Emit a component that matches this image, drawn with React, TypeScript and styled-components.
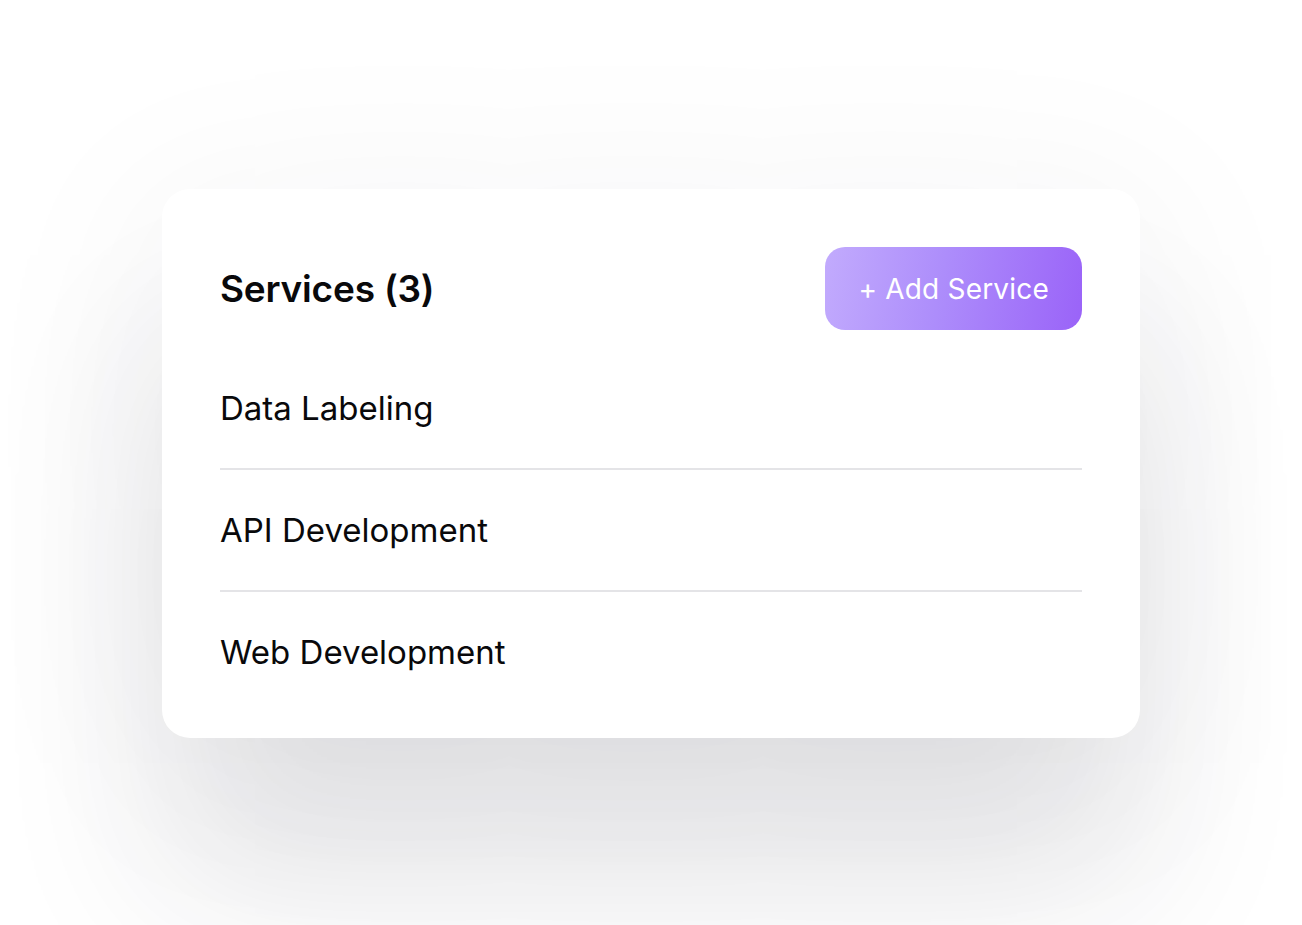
import React from 'react'
import styled, { createGlobalStyle } from 'styled-components'

const GlobalStyle = createGlobalStyle`
    html, body {
        margin: 0;
        padding: 0;
        background: #ffffff;
        font-family: Inter, 'Noto Sans', sans-serif;
        -webkit-font-smoothing: antialiased;
    }
`
const Page = styled.div`
    min-height: 925px;
    display: flex;
    justify-content: center;
    align-items: flex-start;
    padding-top: 189px;
    box-sizing: border-box;
    overflow: hidden;
`
const Card = styled.div`
    width: 978px;
    box-sizing: border-box;
    padding: 58px 58px 26px;
    background: #ffffff;
    border-radius: 28px;
    box-shadow: 0 150px 170px rgba(39, 39, 52, 0.11), 0 30px 200px rgba(39, 39, 52, 0.07);
`
const Header = styled.div`
    display: flex;
    justify-content: space-between;
    align-items: center;
    margin-bottom: 18px;
`
const Title = styled.h2`
    margin: 0;
    font-size: 37px;
    font-weight: 600;
    color: #09090b;
    letter-spacing: -0.2px;
`
const AddButton = styled.button`
    height: 83px;
    padding: 0 33px;
    border: none;
    border-radius: 20px;
    background: linear-gradient(100deg, #c2abfd 0%, #ad8dfb 45%, #9a63f8 100%);
    color: #ffffff;
    font-family: inherit;
    font-size: 28px;
    font-weight: 400;
    letter-spacing: 0.2px;
    cursor: pointer;
`
const List = styled.ul`
    list-style: none;
    margin: 0;
    padding: 0;
`
const Item = styled.li`
    height: 120px;
    display: flex;
    align-items: center;
    font-size: 33px;
    color: #09090b;
    border-bottom: 2px solid #e4e4e7;

    &:last-child {
        border-bottom: none;
    }
`

const services = ['Data Labeling', 'API Development', 'Web Development']

const App = () => {
    return (
        <Page>
            <GlobalStyle />
            <Card>
                <Header>
                    <Title>Services ({services.length})</Title>
                    <AddButton>+ Add Service</AddButton>
                </Header>
                <List>
                    {services.map((name) => (
                        <Item key={name}>{name}</Item>
                    ))}
                </List>
            </Card>
        </Page>
    )
}

export default App
